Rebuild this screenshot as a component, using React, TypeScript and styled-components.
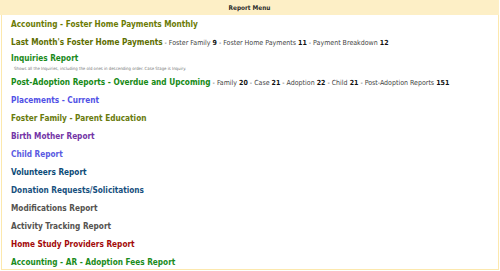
import React from "react";
import styled, { createGlobalStyle } from "styled-components";

const Global = createGlobalStyle`
  html, body { margin: 0; padding: 0; background: #ffffff; }
  body { font-family: "DejaVu Sans Condensed", "DejaVu Sans", sans-serif; }
`;

const Panel = styled.div`
  box-sizing: border-box;
  width: 498px;
  height: 270px;
  margin-left: 1px;
  border: 1px solid #fce8ad;
  border-top: none;
  background: #ffffff;
  display: flex;
  flex-direction: column;
`;

const Header = styled.div`
  height: 15px;
  flex-shrink: 0;
  margin: 0 -1px 0 -2px;
  background: #fdefc6;
  display: flex;
  align-items: center;
  justify-content: center;
  font-size: 6.4px;
  font-weight: bold;
  color: #2a2a2a;
`;

const List = styled.div`
  display: flex;
  flex-direction: column;
  padding: 1px 0 0 9px;
`;

const Item = styled.div<{ $h?: number }>`
  flex-shrink: 0;
  font-size: 8.2px;
  height: ${(p) => p.$h ?? 18}px;
  line-height: ${(p) => p.$h ?? 18}px;
  white-space: nowrap;
`;

const Title = styled.span<{ $c: string }>`
  font-size: 8.2px;
  font-weight: bold;
  color: ${(p) => p.$c};
`;

const Meta = styled.span`
  font-size: 7px;
  color: #444;
  margin-left: 2px;
  b { color: #111; }
`;

const Desc = styled.div`
  flex-shrink: 0;
  height: 8px;
  line-height: 8px;
  padding-left: 3px;
  font-size: 4.3px;
  color: #777;
  white-space: nowrap;
`;

const rows: { t: string; c: string }[] = [
  { t: "Placements - Current", c: "#5151e6" },
  { t: "Foster Family - Parent Education", c: "#687a0c" },
  { t: "Birth Mother Report", c: "#7334a6" },
  { t: "Child Report", c: "#5a5ae2" },
  { t: "Volunteers Report", c: "#0c4c78" },
  { t: "Donation Requests/Solicitations", c: "#17507e" },
  { t: "Modifications Report", c: "#555350" },
  { t: "Activity Tracking Report", c: "#555350" },
  { t: "Home Study Providers Report", c: "#a30a0a" },
  { t: "Accounting - AR - Adoption Fees Report", c: "#1b8c1b" },
];

export default function App() {
  return (
    <>
      <Global />
      <Panel>
        <Header>Report Menu</Header>
        <List>
          <Item $h={17}>
            <Title $c="#6c7b05">Accounting - Foster Home Payments Monthly</Title>
          </Item>
          <Item>
            <Title $c="#5e6e00">Last Month's Foster Home Payments</Title>
            <Meta>
              - Foster Family <b>9</b> - Foster Home Payments <b>11</b> - Payment Breakdown <b>12</b>
            </Meta>
          </Item>
          <Item $h={14}>
            <Title $c="#1a8a1a">Inquiries Report</Title>
          </Item>
          <Desc>Shows all the Inquiries, including the old ones in descending order. Case Stage is Inquiry.</Desc>
          <Item>
            <Title $c="#168a16">Post-Adoption Reports - Overdue and Upcoming</Title>
            <Meta>
              - Family <b>20</b> - Case <b>21</b> - Adoption <b>22</b> - Child <b>21</b> - Post-Adoption Reports <b>151</b>
            </Meta>
          </Item>
          {rows.map((r) => (
            <Item key={r.t}>
              <Title $c={r.c}>{r.t}</Title>
            </Item>
          ))}
        </List>
      </Panel>
    </>
  );
}
